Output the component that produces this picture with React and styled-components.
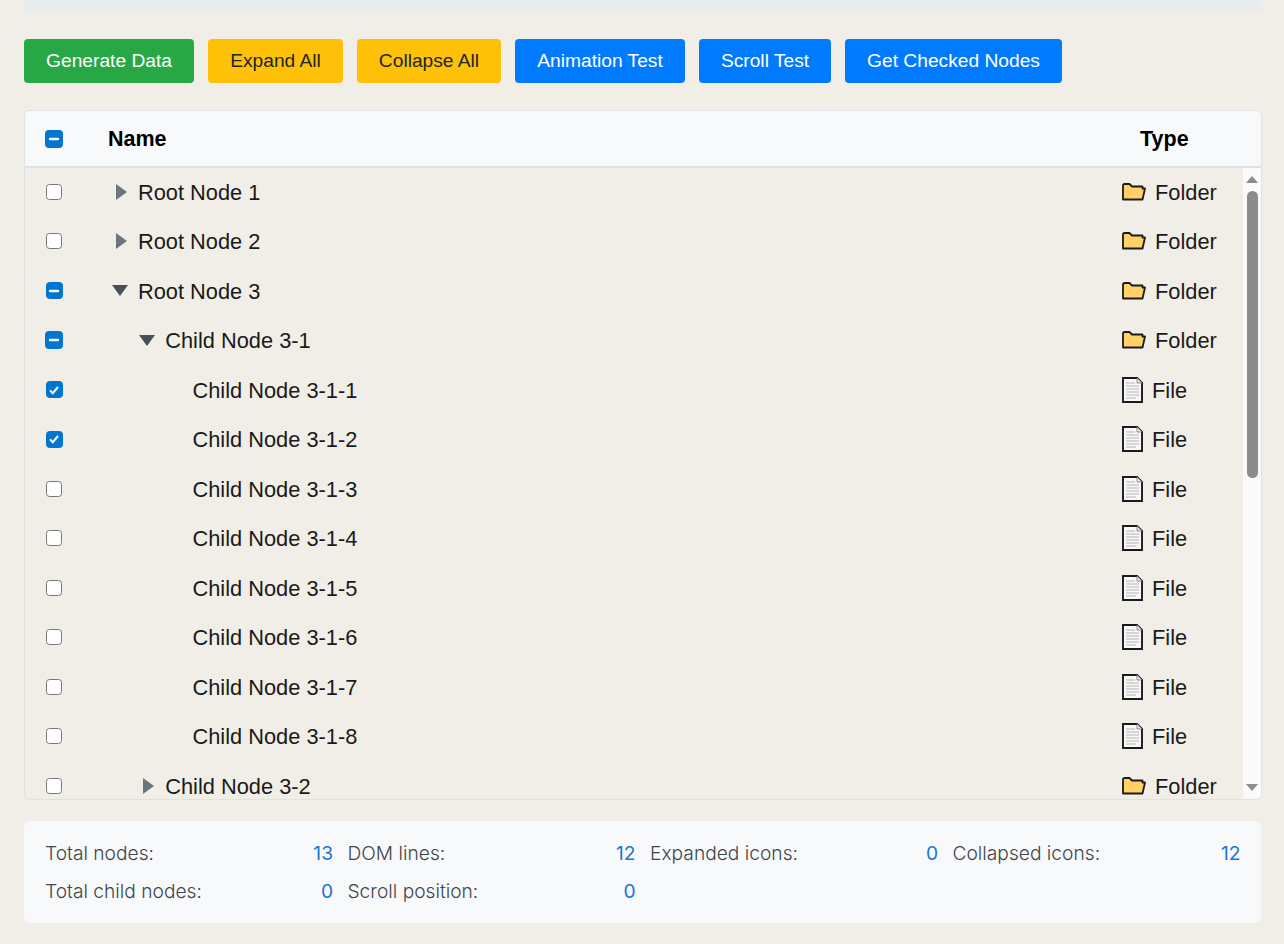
import React from 'react';
import styled, { createGlobalStyle } from 'styled-components';

const GlobalStyle = createGlobalStyle`
  html, body {
    margin: 0;
    padding: 0;
    background: #f1eee7;
    font-family: "Liberation Sans", Arial, sans-serif;
    overflow: hidden;
  }
`;

const buttons = [
  { label: 'Generate Data', kind: 'green', width: 170 },
  { label: 'Expand All', kind: 'yellow', width: 135 },
  { label: 'Collapse All', kind: 'yellow', width: 144 },
  { label: 'Animation Test', kind: 'blue', width: 170 },
  { label: 'Scroll Test', kind: 'blue', width: 132 },
  { label: 'Get Checked Nodes', kind: 'blue', width: 217 },
];

const rows = [
  { name: 'Root Node 1', depth: 0, arrow: 'right', check: 'off', type: 'Folder' },
  { name: 'Root Node 2', depth: 0, arrow: 'right', check: 'off', type: 'Folder' },
  { name: 'Root Node 3', depth: 0, arrow: 'down', check: 'some', box: 17, type: 'Folder' },
  { name: 'Child Node 3-1', depth: 1, arrow: 'down', check: 'some', box: 18, type: 'Folder' },
  { name: 'Child Node 3-1-1', depth: 2, check: 'on', box: 17, type: 'File' },
  { name: 'Child Node 3-1-2', depth: 2, check: 'on', box: 17, type: 'File' },
  { name: 'Child Node 3-1-3', depth: 2, check: 'off', type: 'File' },
  { name: 'Child Node 3-1-4', depth: 2, check: 'off', type: 'File' },
  { name: 'Child Node 3-1-5', depth: 2, check: 'off', type: 'File' },
  { name: 'Child Node 3-1-6', depth: 2, check: 'off', type: 'File' },
  { name: 'Child Node 3-1-7', depth: 2, check: 'off', type: 'File' },
  { name: 'Child Node 3-1-8', depth: 2, check: 'off', type: 'File' },
  { name: 'Child Node 3-2', depth: 1, arrow: 'right', check: 'off', type: 'Folder' },
];

const stats = [
  ['Total nodes:', '13'],
  ['DOM lines:', '12'],
  ['Expanded icons:', '0'],
  ['Collapsed icons:', '12'],
  ['Total child nodes:', '0'],
  ['Scroll position:', '0'],
];

const Page = styled.div`
  width: 1284px;
  height: 944px;
  padding: 0 22px 0 24px;
  box-sizing: border-box;
  overflow: hidden;
`;

const TopStrip = styled.div`
  height: 12px;
  margin-right: 1px;
  background: #e9ecef;
  border-radius: 0 0 4px 4px;
`;

const Toolbar = styled.div`
  display: flex;
  gap: 14px;
  margin-top: 27px;
`;

const colors = {
  green: ['#28a745', '#fff'],
  yellow: ['#ffc107', '#212529'],
  blue: ['#007bff', '#fff'],
};

const Button = styled.button`
  width: ${p => p.$width}px;
  height: 44px;
  padding: 0;
  border: 0;
  border-radius: 4px;
  background: ${p => colors[p.$kind][0]};
  color: ${p => colors[p.$kind][1]};
  font: 19.2px "Liberation Sans", Arial, sans-serif;
`;

const Table = styled.div`
  margin-top: 27px;
  height: 690px;
  border: 1px solid #dee2e6;
  border-radius: 6px;
  box-sizing: border-box;
  overflow: hidden;
`;

const Header = styled.div`
  display: flex;
  align-items: center;
  height: 57px;
  margin-bottom: -1px;
  box-sizing: border-box;
  background: #f8f9fa;
  border-bottom: 2px solid #dee2e6;
  font-size: 21.5px;
  font-weight: 700;
  color: #000;
`;

const CheckCell = styled.div`
  width: 58px;
  display: flex;
  flex: none;
  justify-content: center;
`;

const HeaderName = styled.div`
  flex: 1;
  padding: 1px 0 0 25px;
`;

const HeaderType = styled.div`
  width: 197px;
  padding: 1px 0 0 76px;
  box-sizing: border-box;
`;

const Body = styled.div`
  display: flex;
  height: 632px;
`;

const List = styled.div`
  flex: 1;
  min-width: 0;
  overflow: hidden;
`;

const Row = styled.div`
  display: flex;
  align-items: center;
  height: 49.5px;
  color: #1a1a1a;
  font-size: 21.8px;
`;

const RowText = styled.span`
  padding-top: 2px;
`;

const NameCell = styled.div`
  flex: 1;
  display: flex;
  align-items: center;
  padding-left: ${p => 25 + p.$depth * 27.25}px;
`;

const ArrowSlot = styled.span`
  width: 30px;
  flex: none;
  display: flex;
  align-items: center;
  padding-left: ${p => (p.$dir === 'down' ? '4px' : '7.5px')};
  box-sizing: border-box;
  height: 20px;
`;

const TypeCell = styled.div`
  width: 179px;
  flex: none;
  box-sizing: border-box;
  padding-left: 58px;
  display: flex;
  align-items: center;
  gap: 9px;
`;

const Box = styled.span`
  width: ${p => p.$size}px;
  height: ${p => p.$size}px;
  box-sizing: border-box;
  border-radius: 3.5px;
  border: 1px solid ${p => (p.$state === 'off' ? '#767676' : '#0075d2')};
  background: ${p => (p.$state === 'off' ? '#fff' : '#0075d2')};
  display: flex;
  align-items: center;
  justify-content: center;
`;

const Bar = styled.div`
  width: 18px;
  flex: none;
  margin-top: 1px;
  background: #fafafb;
  position: relative;
`;

const Thumb = styled.div`
  position: absolute;
  left: 4px;
  top: 23px;
  width: 11px;
  height: 287px;
  border-radius: 6px;
  background: #8c8c8c;
`;

const BarArrow = styled.span`
  position: absolute;
  left: 3px;
  ${p => (p.$up ? 'top: 8px;' : 'bottom: 8px;')}
  width: 0;
  height: 0;
  border-left: 6.5px solid transparent;
  border-right: 6.5px solid transparent;
  ${p => (p.$up ? 'border-bottom: 7px solid #8c8c8c;' : 'border-top: 7px solid #8c8c8c;')}
`;

const Stats = styled.div`
  margin: 21px 1px 0 0;
  height: 102px;
  padding: 13px 21px 0;
  box-sizing: border-box;
  background: #f8f9fa;
  border-radius: 6px;
  display: grid;
  grid-template-columns: repeat(4, 288px);
  grid-auto-rows: 38px;
  column-gap: 14.5px;
  font-family: Inter, "Liberation Sans", sans-serif;
  font-size: 19.2px;
  font-weight: 300;
`;

const Stat = styled.div`
  display: flex;
  align-items: center;
  justify-content: space-between;
`;

const StatLabel = styled.span`
  color: #3f464d;
`;

const StatValue = styled.span`
  color: #1976d2;
  font-weight: 400;
`;

const Arrow = ({ dir }) =>
  dir === 'down' ? (
    <svg width="16" height="11" viewBox="0 0 16 11">
      <path d="M0 0h16l-8 11z" fill="#495057" />
    </svg>
  ) : (
    <svg width="11" height="16" viewBox="0 0 11 16">
      <path d="M0 0l11 8-11 8z" fill="#6c757d" />
    </svg>
  );

const Check = ({ state, size = 16 }) => (
  <Box $state={state} $size={size}>
    {state === 'on' && (
      <svg width="12" height="12" viewBox="0 0 12 12">
        <path d="M2 6.4l2.8 2.8L10 3" fill="none" stroke="#fff" strokeWidth="2" />
      </svg>
    )}
    {state === 'some' && (
      <svg width="12" height="12" viewBox="0 0 12 12">
        <path d="M2 6h8" stroke="#fff" strokeWidth="2.4" strokeLinecap="round" />
      </svg>
    )}
  </Box>
);

const FolderIcon = () => (
  <svg width="24" height="18" viewBox="0 0 24 18">
    <path
      d="M1 16.500V2.500A1.500 1.500 0 0 1 2.500 1h5L10 3.500h10.500V5.500H23L20.500 16.500z"
      fill="#ffd166"
      stroke="#1a1a1a"
      strokeWidth="1.800"
      strokeLinejoin="round"
    />
  </svg>
);

const FileIcon = () => (
  <svg width="21" height="26" viewBox="0 0 21 26">
    <path d="M1 1h14l5 5v19H1z" fill="#f8f8f8" stroke="#1a1a1a" strokeWidth="1.900" />
    <path d="M15 1v5h5" fill="#e8e8e8" stroke="#777" strokeWidth="0.800" />
    <path d="M4 6h9M4 9h13M4 12h13M4 15h13M4 18h13M4 21h10" stroke="#b4b4b4" strokeWidth="1" />
  </svg>
);

export default function App() {
  return (
    <Page>
      <GlobalStyle />
      <TopStrip />
      <Toolbar>
        {buttons.map(b => (
          <Button key={b.label} $kind={b.kind} $width={b.width}>
            {b.label}
          </Button>
        ))}
      </Toolbar>
      <Table>
        <Header>
          <CheckCell>
            <Check state="some" size={18} />
          </CheckCell>
          <HeaderName>Name</HeaderName>
          <HeaderType>Type</HeaderType>
        </Header>
        <Body>
          <List>
            {rows.map(r => (
              <Row key={r.name}>
                <CheckCell>
                  <Check state={r.check} size={r.box} />
                </CheckCell>
                <NameCell $depth={r.depth}>
                  <ArrowSlot $dir={r.arrow}>{r.arrow && <Arrow dir={r.arrow} />}</ArrowSlot>
                  <RowText>{r.name}</RowText>
                </NameCell>
                <TypeCell>
                  {r.type === 'File' ? <FileIcon /> : <FolderIcon />}
                  <RowText>{r.type}</RowText>
                </TypeCell>
              </Row>
            ))}
          </List>
          <Bar>
            <BarArrow $up />
            <Thumb />
            <BarArrow />
          </Bar>
        </Body>
      </Table>
      <Stats>
        {stats.map(([label, value]) => (
          <Stat key={label}>
            <StatLabel>{label}</StatLabel>
            <StatValue>{value}</StatValue>
          </Stat>
        ))}
      </Stats>
    </Page>
  );
}
